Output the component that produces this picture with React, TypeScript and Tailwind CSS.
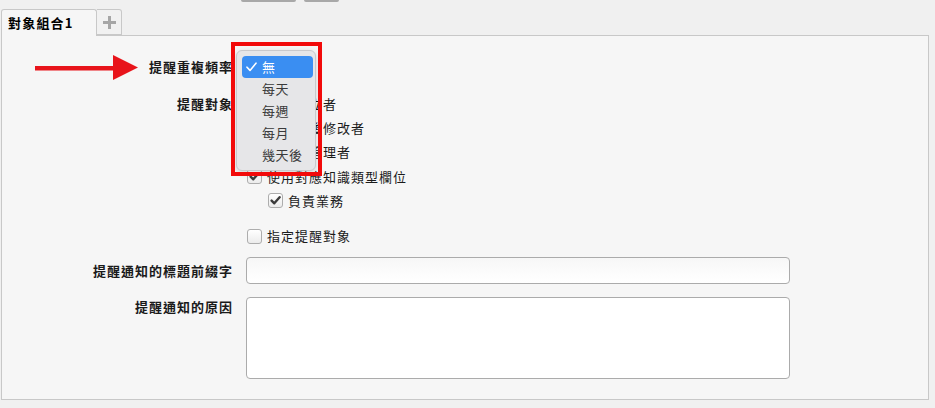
import React from "react";

function Box({ checked }: { checked?: boolean }) {
  return (
    <span className="w-[15px] h-[15px] shrink-0 rounded-[3px] border border-[#adadad] bg-linear-to-b from-white to-[#ececec] flex items-center justify-center">
      {checked && (
        <svg width="11" height="11" viewBox="0 0 11 11">
          <path d="M1.6 5.6 L4.3 8.3 L9.6 2.2" stroke="#3c3c3c" strokeWidth="2.4" fill="none" strokeLinecap="round" strokeLinejoin="round" />
        </svg>
      )}
    </span>
  );
}

function CheckRow({ h, text, checked, indent }: { h: string; text: string; checked?: boolean; indent?: boolean }) {
  return (
    <div className={`flex items-center ${h} ${indent ? "pl-[22px]" : "pl-px"}`}>
      <Box checked={checked} />
      <span className="ml-[5px] whitespace-nowrap">{text}</span>
    </div>
  );
}

export default function App() {
  return (
    <div className="relative w-[935px] h-[408px] overflow-hidden bg-[#f0f0f0] text-[13px] tracking-[1px] text-[#1a1a1a] font-['Noto_Sans_CJK_TC','Noto_Sans',sans-serif]">
      {/* cut-off buttons above */}
      <div className="flex h-[9px] pl-[241px] gap-[8px]">
        <div className="w-[55px] h-[2px] bg-[#a8a8a8] rounded-b-[2px]" />
        <div className="w-[35px] h-[2px] bg-[#a8a8a8] rounded-b-[2px]" />
      </div>
      {/* tabs */}
      <div className="relative z-10 flex pl-px h-[26px]">
        <div className="w-[96px] h-[27px] border border-b-0 border-[#c8c8c8] rounded-t-[3px] bg-[#f6f6f6] pl-[6px] flex items-center font-bold text-[13px] tracking-[1.2px] text-black">
          對象組合1
        </div>
        <div className="w-[25px] h-[26px] border border-l-0 border-[#c8c8c8] rounded-tr-[3px] bg-[#f1f1f1] flex items-center justify-center">
          <svg width="13" height="13" viewBox="0 0 13 13">
            <rect x="5" y="0" width="3" height="13" fill="#a6a6a6" />
            <rect x="0" y="5" width="13" height="3" fill="#a6a6a6" />
          </svg>
        </div>
      </div>
      {/* panel */}
      <div className="ml-px w-[928px] h-[365px] border border-[#c8c8c8] bg-[#f6f6f6] pt-[21px]">
        <div className="flex items-center h-[20px]">
          <div className="w-[231px] text-right font-bold">提醒重複頻率</div>
        </div>
        <div className="flex mt-[14px]">
          <div className="w-[231px] text-right font-bold leading-[25px]">提醒對象</div>
          <div className="ml-[13px] flex flex-col">
            <CheckRow h="h-[25px]" text="知識建立者" />
            <CheckRow h="h-[23px]" text="知識最後修改者" />
            <CheckRow h="h-[25px]" text="知識庫管理者" />
            <CheckRow h="h-[25px]" text="使用對應知識類型欄位" checked />
            <CheckRow h="h-[23px]" text="負責業務" checked indent />
            <div className="mt-[12px]">
              <CheckRow h="h-[24px]" text="指定提醒對象" />
            </div>
          </div>
        </div>
        <div className="flex items-center mt-[9px]">
          <div className="w-[231px] text-right font-bold">提醒通知的標題前綴字</div>
          <div className="ml-[13px] w-[544px] h-[27px] rounded-[4px] border border-[#ababab] bg-linear-to-b from-[#f7f7f7] to-white" />
        </div>
        <div className="flex mt-[13px]">
          <div className="w-[231px] text-right font-bold leading-[20px]">提醒通知的原因</div>
          <div className="ml-[13px] w-[544px] h-[82px] rounded-[4px] border border-[#ababab] bg-white" />
        </div>
      </div>

      {/* open select menu */}
      <div className="absolute left-[236px] top-[50px] w-[80px] h-[121px] rounded-[6px] border border-[#c9c9cc] bg-[#e6e6e8] shadow-[0_2px_6px_rgba(0,0,0,0.15)] pt-[5px] pl-[5px] pr-[2px] text-[13px] tracking-[0.5px] text-[#3a3a3a]">
        <div className="flex items-center h-[22px] rounded-[4px] bg-[#3a8ef2] text-white">
          <svg width="11" height="10" viewBox="0 0 11 10" className="ml-[4px]">
            <path d="M1 5.2 L4 8.4 L10 1.2" stroke="white" strokeWidth="1.6" fill="none" strokeLinecap="round" strokeLinejoin="round" />
          </svg>
          <span className="ml-[5px]">無</span>
        </div>
        <div className="flex items-center h-[22px] pl-[20px]">每天</div>
        <div className="flex items-center h-[22px] pl-[20px]">每週</div>
        <div className="flex items-center h-[22px] pl-[20px]">每月</div>
        <div className="flex items-center h-[22px] pl-[20px]">幾天後</div>
      </div>

      {/* red highlight box */}
      <div className="absolute left-[231px] top-[42px] w-[91px] h-[134px] border-[4px] border-[#f20a0a]" />

      {/* red arrow */}
      <svg className="absolute left-[35px] top-[55px]" width="104" height="26" viewBox="0 0 104 26">
        <rect x="0" y="11" width="82" height="4.5" fill="#e8141b" />
        <polygon points="78,0 103,12.5 78,25" fill="#e8141b" />
      </svg>
    </div>
  );
}
